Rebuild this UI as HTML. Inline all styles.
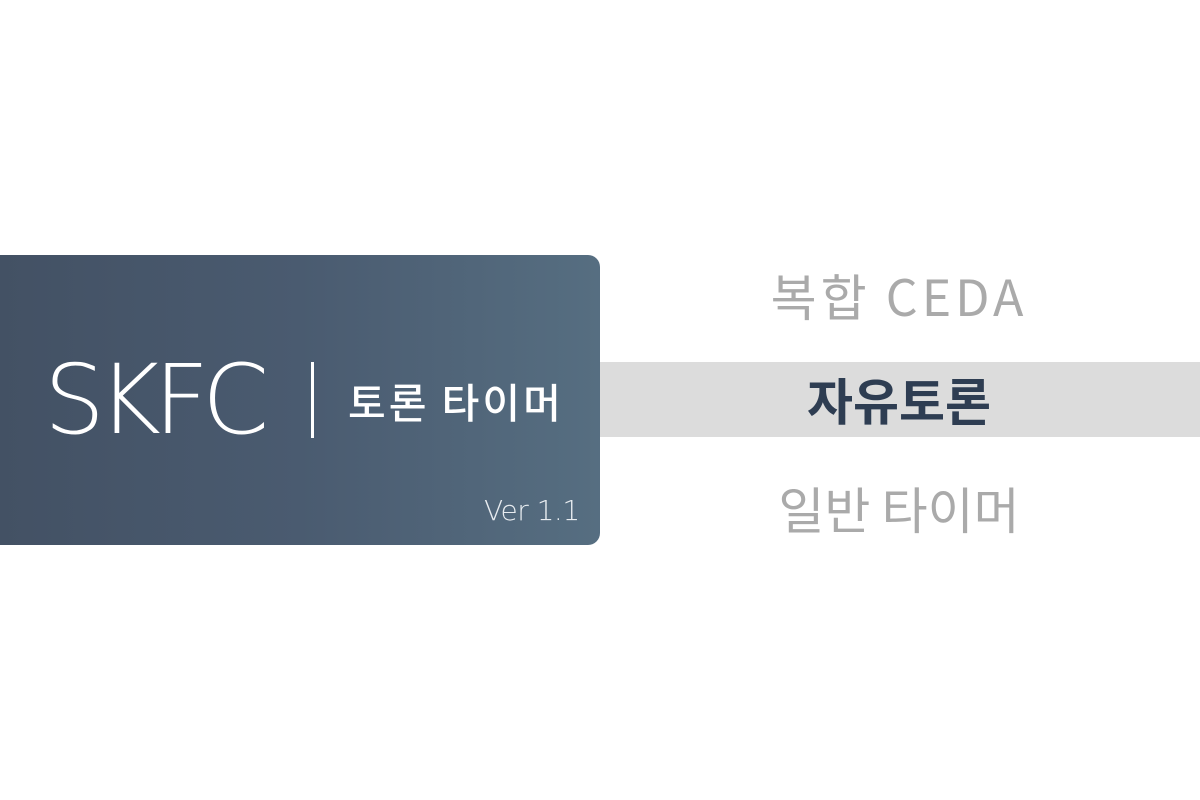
<!DOCTYPE html>
<html><head><meta charset="utf-8"><style>
html,body{margin:0;width:1200px;height:800px;background:#fff;overflow:hidden;font-family:"Liberation Sans","Noto Sans CJK KR",sans-serif}
.panel{position:absolute;left:0;top:255px;width:600px;height:290px;border-radius:0 12px 12px 0;background:linear-gradient(90deg,#435164,#4a5b70 50%,#566e81)}
.skfc{position:absolute;left:44px;top:345px;font-family:"DejaVu Sans","Liberation Sans",sans-serif;font-weight:200;font-size:96px;color:#fff;line-height:110px;letter-spacing:-7px}
.bar{position:absolute;left:311px;top:362px;width:3px;height:76px;background:#fff}
.title{position:absolute;left:348px;top:373px;font-size:41px;color:#fff;font-weight:500;line-height:54px;font-family:"Noto Sans CJK KR",sans-serif;letter-spacing:3px}
.ver{position:absolute;left:484px;top:493px;font-family:"DejaVu Sans","Liberation Sans",sans-serif;font-weight:200;font-size:28px;color:#e8ecf0;line-height:36px;letter-spacing:-0.5px}
.band{position:absolute;left:600px;top:362px;width:600px;height:75px;background:#dcdcdc}
.item{position:absolute;left:600px;width:598px;text-align:center;font-size:50px;line-height:64px;font-family:"Noto Sans CJK KR",sans-serif}
</style></head><body>
<div class="panel"></div>
<div class="skfc">SKFC</div>
<div class="bar"></div>
<div class="title">토론 타이머</div>
<div class="ver">Ver 1.1</div>
<div class="band"></div>
<div class="item" style="top:263px;color:#aaa;letter-spacing:4px">복합 CEDA</div>
<div class="item" style="top:367px;color:#2e3d52;font-weight:700">자유토론</div>
<div class="item" style="top:476px;color:#aaa">일반 타이머</div>
</body></html>
